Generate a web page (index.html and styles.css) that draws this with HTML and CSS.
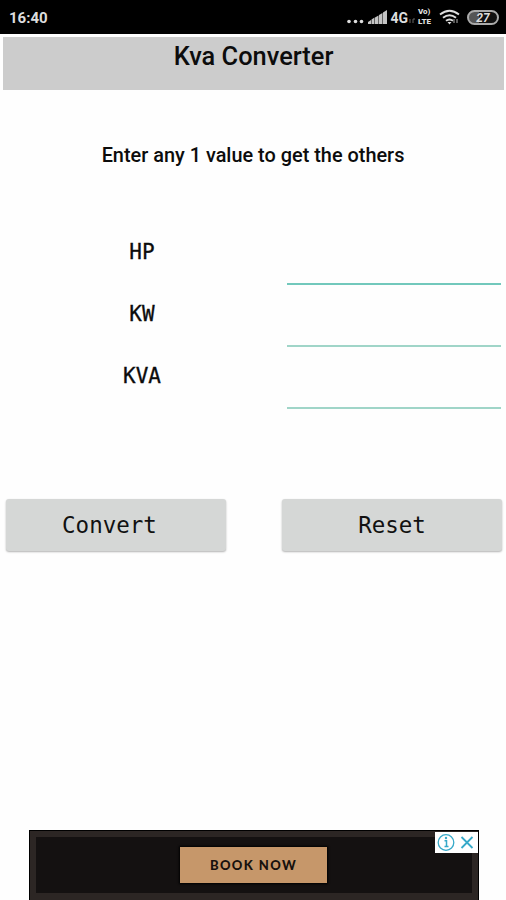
FILE: index.html
```html
<!DOCTYPE html>
<html>
<head>
    <meta charset="utf-8">
    <title>Kva Converter</title>
    <link rel="stylesheet" href="styles.css">
</head>
<body>
    <!-- Phone status bar -->
    <div class="status-bar">
        <span class="time">16:40</span>
        <svg class="dots" width="17" height="5" viewBox="0 0 17 5" fill="#ddd">
            <circle cx="2" cy="2.5" r="1.8"/><circle cx="8.5" cy="2.5" r="1.8"/><circle cx="14.5" cy="2.5" r="1.8"/>
        </svg>
        <svg class="signal" width="20" height="15" viewBox="0 0 20 15" fill="#c4c4c4">
            <path d="M0 14v-2l3-2v4zM3.500 14V9.500l3-2V14zM7 14V7.500l3.500-2V14zM11 14V5l3.500-2v11zM15 14V2.500L19 0v14z"/>
        </svg>
        <span class="network">4G</span>
        <svg class="arrows" width="7" height="6" viewBox="0 0 7 6" stroke="#666" fill="none">
            <path d="M2 1v4M5 5V1h2"/>
        </svg>
        <span class="volte"><span>Vo)</span><span>LTE</span></span>
        <svg class="wifi" width="21" height="16" viewBox="0 0 21 16" fill="none" stroke="#ddd" stroke-width="1.900">
            <path d="M1 5.500Q10.500-2 20 5.500M4 8.800Q10.500 3.500 17 8.800M7 11.800Q10.500 9 14 11.800"/>
            <path d="M8.500 13h4l-2 2.500z" fill="#ddd" stroke="none"/>
            <path d="M15 14v-4M18 10v4" stroke="#777" stroke-width="1.500"/>
        </svg>
        <span class="battery">27</span>
    </div>

    <h1>Kva Converter</h1>
    <p class="hint">Enter any 1 value to get the others</p>

    <!-- Value inputs -->
    <div class="fields">
        <div class="field">
            <label for="hp">HP</label>
            <input type="text" id="hp" class="active">
        </div>
        <div class="field">
            <label for="kw">KW</label>
            <input type="text" id="kw">
        </div>
        <div class="field">
            <label for="kva">KVA</label>
            <input type="text" id="kva">
        </div>
    </div>

    <div class="buttons">
        <button class="convert">Convert</button>
        <button>Reset</button>
    </div>

    <!-- Ad banner -->
    <div class="ad">
        <div class="ad-inner">
            <a class="book">BOOK NOW</a>
        </div>
        <div class="ad-choices">
            <svg width="42" height="21" viewBox="0 0 42 21" fill="none" stroke="#36a9c9" stroke-width="1.300">
                <circle cx="11" cy="10.500" r="7.800"/>
                <path d="M9.500 8.800H11.500V14.500M9.500 14.500h4" stroke-width="1.500"/>
                <circle cx="11" cy="6" r="1.200" fill="#36a9c9" stroke="none"/>
                <path d="M26.500 5l11 11M37.500 5l-11 11" stroke-width="1.800"/>
            </svg>
        </div>
    </div>
</body>
</html>
```
FILE: styles.css
```css
* {
    box-sizing: border-box;
}
body {
    font-family: Roboto, sans-serif;
    background-color: #fefefe;
    color: #0c0c0c;
    margin: 0;
    height: 900px;
    overflow: hidden;
    display: flex;
    flex-direction: column;
}
/* Status bar */
.status-bar {
    background-color: #000;
    color: #ddd;
    height: 34px;
    padding: 0 7px 0 9px;
    display: flex;
    align-items: center;
    flex-shrink: 0;
}
.time {
    font-size: 15px;
    font-weight: 700;
    margin-right: auto;
    padding-top: 2px;
}
.dots {
    margin-top: 9px;
    margin-right: 4px;
}
.signal {
    margin-right: 2px;
}
.network {
    font-size: 14px;
    font-weight: 700;
    padding-top: 2px;
}
.arrows {
    margin-top: 8px;
    margin-right: 3px;
}
.volte {
    font-size: 8px;
    font-weight: 900;
    line-height: 10px;
    width: 16px;
    margin-right: 5px;
    display: flex;
    flex-direction: column;
}
.wifi {
    margin-right: 7px;
}
.battery {
    width: 32px;
    height: 15px;
    border: 2px solid #aaa;
    border-radius: 8px;
    background: linear-gradient(to right, #555 35%, #111 35%);
    font-size: 12px;
    font-weight: 700;
    font-style: italic;
    line-height: 12px;
    text-align: center;
}
h1 {
    background-color: #ccc;
    font-size: 25.4px;
    font-weight: 500;
    line-height: 30px;
    text-align: center;
    height: 53px;
    margin: 3px 2px 0 3px;
    padding-top: 4px;
    flex-shrink: 0;
}
.hint {
    font-size: 19.9px;
    font-weight: 500;
    line-height: 24px;
    text-align: center;
    margin: 54px 0 0;
}
/* Label and underlined input on each row */
.fields {
    margin-top: 56px;
}
.field {
    display: flex;
    height: 62px;
}
.field label {
    font-family: 'DejaVu Sans Mono', monospace;
    font-size: 21px;
    line-height: 56px;
    width: 284px;
    text-align: center;
    -webkit-text-stroke: 0.3px #0c0c0c;
}
.field input {
    width: 214px;
    height: 61px;
    margin-left: 3px;
    border: none;
    border-bottom: 2px solid #a0d5c8;
    background: none;
    outline: none;
    font-size: 20px;
}
.field input.active {
    border-bottom-color: #72c8bc;
}
.buttons {
    display: flex;
    justify-content: space-between;
    margin-top: 89px;
    padding: 0 4px 0 6px;
}
button {
    font-family: 'DejaVu Sans Mono', monospace;
    font-size: 22.5px;
    color: #111;
    background-color: #d5d7d6;
    width: 220px;
    height: 52px;
    padding: 0;
    border: none;
    border-radius: 3px;
    box-shadow: 0 1px 2px rgba(0, 0, 0, 0.3);
}
.convert {
    padding-right: 13px;
}
/* Banner at the bottom of the screen */
.ad {
    position: relative;
    width: 450px;
    height: 70px;
    margin: auto auto 0 28.500px;
    padding: 6px;
    background-color: #2c2624;
    border: 1px solid #000;
    border-bottom: none;
}
.ad-inner {
    background-color: #141111;
    height: 56px;
    display: flex;
    justify-content: center;
    align-items: center;
}
.book {
    background-color: #c6976a;
    color: #17110d;
    font-family: Lato, sans-serif;
    font-size: 13px;
    font-weight: 900;
    letter-spacing: 1.4px;
    line-height: 36px;
    width: 147px;
    text-align: center;
    box-shadow: 0 0 2px 1px #000;
}
.ad-choices {
    position: absolute;
    top: 1px;
    right: 0;
    width: 43px;
    height: 21px;
    background-color: #fff;
}
```
